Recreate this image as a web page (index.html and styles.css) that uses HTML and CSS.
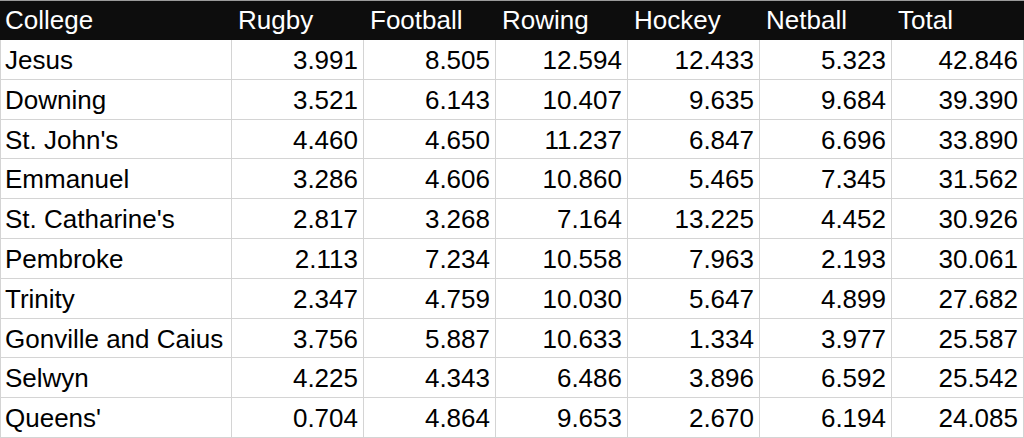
FILE: index.html
```html
<!DOCTYPE html>
<html>
<head>
<meta charset="utf-8">
<link rel="stylesheet" href="styles.css">
</head>
<body>
<div class="sheet">
  <div class="row head">
    <div class="cell name">College</div><div class="cell">Rugby</div><div class="cell">Football</div><div class="cell">Rowing</div><div class="cell">Hockey</div><div class="cell">Netball</div><div class="cell">Total</div>
  </div>
  <div class="row"><div class="cell name">Jesus</div><div class="cell num">3.991</div><div class="cell num">8.505</div><div class="cell num">12.594</div><div class="cell num">12.433</div><div class="cell num">5.323</div><div class="cell num">42.846</div></div>
  <div class="row"><div class="cell name">Downing</div><div class="cell num">3.521</div><div class="cell num">6.143</div><div class="cell num">10.407</div><div class="cell num">9.635</div><div class="cell num">9.684</div><div class="cell num">39.390</div></div>
  <div class="row"><div class="cell name">St. John's</div><div class="cell num">4.460</div><div class="cell num">4.650</div><div class="cell num">11.237</div><div class="cell num">6.847</div><div class="cell num">6.696</div><div class="cell num">33.890</div></div>
  <div class="row"><div class="cell name">Emmanuel</div><div class="cell num">3.286</div><div class="cell num">4.606</div><div class="cell num">10.860</div><div class="cell num">5.465</div><div class="cell num">7.345</div><div class="cell num">31.562</div></div>
  <div class="row"><div class="cell name">St. Catharine's</div><div class="cell num">2.817</div><div class="cell num">3.268</div><div class="cell num">7.164</div><div class="cell num">13.225</div><div class="cell num">4.452</div><div class="cell num">30.926</div></div>
  <div class="row"><div class="cell name">Pembroke</div><div class="cell num">2.113</div><div class="cell num">7.234</div><div class="cell num">10.558</div><div class="cell num">7.963</div><div class="cell num">2.193</div><div class="cell num">30.061</div></div>
  <div class="row"><div class="cell name">Trinity</div><div class="cell num">2.347</div><div class="cell num">4.759</div><div class="cell num">10.030</div><div class="cell num">5.647</div><div class="cell num">4.899</div><div class="cell num">27.682</div></div>
  <div class="row"><div class="cell name">Gonville and Caius</div><div class="cell num">3.756</div><div class="cell num">5.887</div><div class="cell num">10.633</div><div class="cell num">1.334</div><div class="cell num">3.977</div><div class="cell num">25.587</div></div>
  <div class="row"><div class="cell name">Selwyn</div><div class="cell num">4.225</div><div class="cell num">4.343</div><div class="cell num">6.486</div><div class="cell num">3.896</div><div class="cell num">6.592</div><div class="cell num">25.542</div></div>
  <div class="row"><div class="cell name">Queens'</div><div class="cell num">0.704</div><div class="cell num">4.864</div><div class="cell num">9.653</div><div class="cell num">2.670</div><div class="cell num">6.194</div><div class="cell num">24.085</div></div>
</div>
</body>
</html>
```
FILE: styles.css
```css
html, body {
  margin: 0;
  padding: 0;
  background: #ffffff;
}
.sheet {
  width: 1024px;
  font-family: "Liberation Sans", Arial, sans-serif;
  font-size: 26px;
  color: #000;
  border-top: 1px solid #9a9a9a;
  box-sizing: border-box;
}
.row {
  display: grid;
  grid-template-columns: 232px repeat(6, 132px);
  height: 39.8px;
}
.head {
  height: 39px;
  background: #0d0d0d;
  color: #ffffff;
}
.cell {
  box-sizing: border-box;
  border-right: 1px solid #d4d4d4;
  border-bottom: 1px solid #d4d4d4;
  padding: 1px 5px 0 6px;
  line-height: 38px;
  white-space: nowrap;
  overflow: hidden;
}
.head .cell {
  border-right: none;
  border-bottom: none;
  line-height: 38px;
  padding-top: 0;
}
.name {
  border-left: 1px solid #d4d4d4;
  padding-left: 4px;
}
.head .name {
  border-left: none;
  padding-left: 5px;
}
.num {
  text-align: right;
}
```
